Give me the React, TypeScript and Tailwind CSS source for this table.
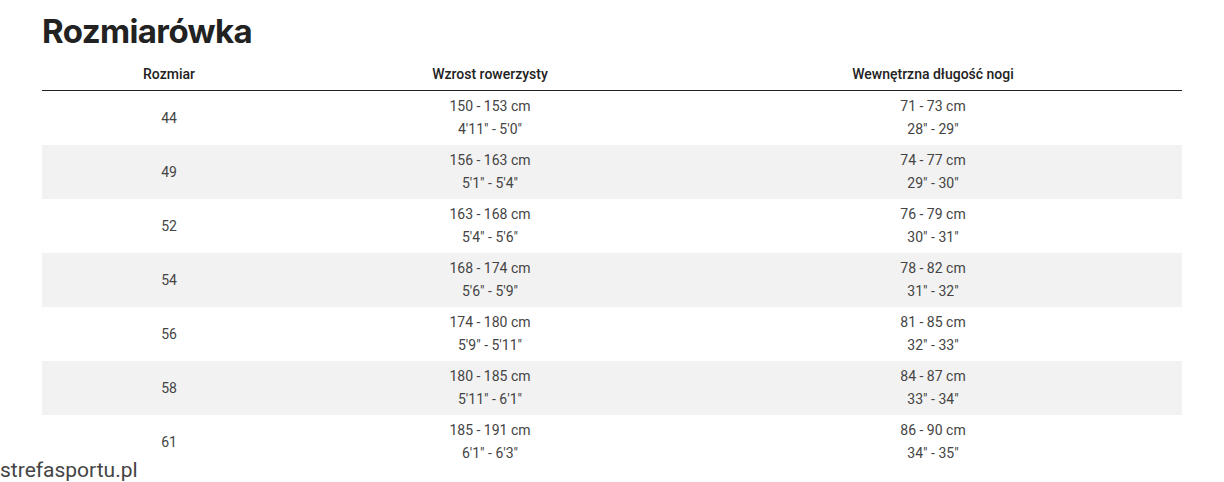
const rows = [
  { size: "44", h: ["150 - 153 cm", "4'11\" - 5'0\""], l: ["71 - 73 cm", "28\" - 29\""] },
  { size: "49", h: ["156 - 163 cm", "5'1\" - 5'4\""], l: ["74 - 77 cm", "29\" - 30\""] },
  { size: "52", h: ["163 - 168 cm", "5'4\" - 5'6\""], l: ["76 - 79 cm", "30\" - 31\""] },
  { size: "54", h: ["168 - 174 cm", "5'6\" - 5'9\""], l: ["78 - 82 cm", "31\" - 32\""] },
  { size: "56", h: ["174 - 180 cm", "5'9\" - 5'11\""], l: ["81 - 85 cm", "32\" - 33\""] },
  { size: "58", h: ["180 - 185 cm", "5'11\" - 6'1\""], l: ["84 - 87 cm", "33\" - 34\""] },
  { size: "61", h: ["185 - 191 cm", "6'1\" - 6'3\""], l: ["86 - 90 cm", "34\" - 35\""] },
];

function Cell({ lines }: { lines: string[] }) {
  return (
    <div className="flex flex-col items-center justify-center leading-[23px]">
      {lines.map((t) => (
        <span key={t}>{t}</span>
      ))}
    </div>
  );
}

export default function App() {
  return (
    <div className="relative h-[482px] w-[1224px] overflow-hidden bg-white font-['Roboto',sans-serif] text-[#333]">
      <div className="px-[42px] pt-[10px]">
        <h1 className="font-['Inter',sans-serif] text-[33px] font-bold leading-[42px] tracking-[-0.6px] text-[#222]">
          Rozmiarówka
        </h1>

        {/* Table */}
        <div className="mt-[6px] w-[1140px]">
          <div className="grid h-[33px] grid-cols-[254px_388px_498px] items-center border-b border-[#222] text-[14px] font-medium text-[#222]">
            <div className="text-center">Rozmiar</div>
            <div className="text-center">Wzrost rowerzysty</div>
            <div className="text-center">Wewnętrzna długość nogi</div>
          </div>
          {rows.map((r, i) => (
            <div
              key={r.size}
              className={`grid h-[54px] grid-cols-[254px_388px_498px] items-center text-[14px] text-[#444] ${
                i % 2 === 1 ? "bg-[#f2f2f2]" : "bg-white"
              }`}
            >
              <div className="text-center">{r.size}</div>
              <Cell lines={r.h} />
              <Cell lines={r.l} />
            </div>
          ))}
        </div>
      </div>

      {/* watermark */}
      <div className="absolute left-0 top-[456px] text-[21px] leading-[28px] text-[#444]">strefasportu.pl</div>
    </div>
  );
}
